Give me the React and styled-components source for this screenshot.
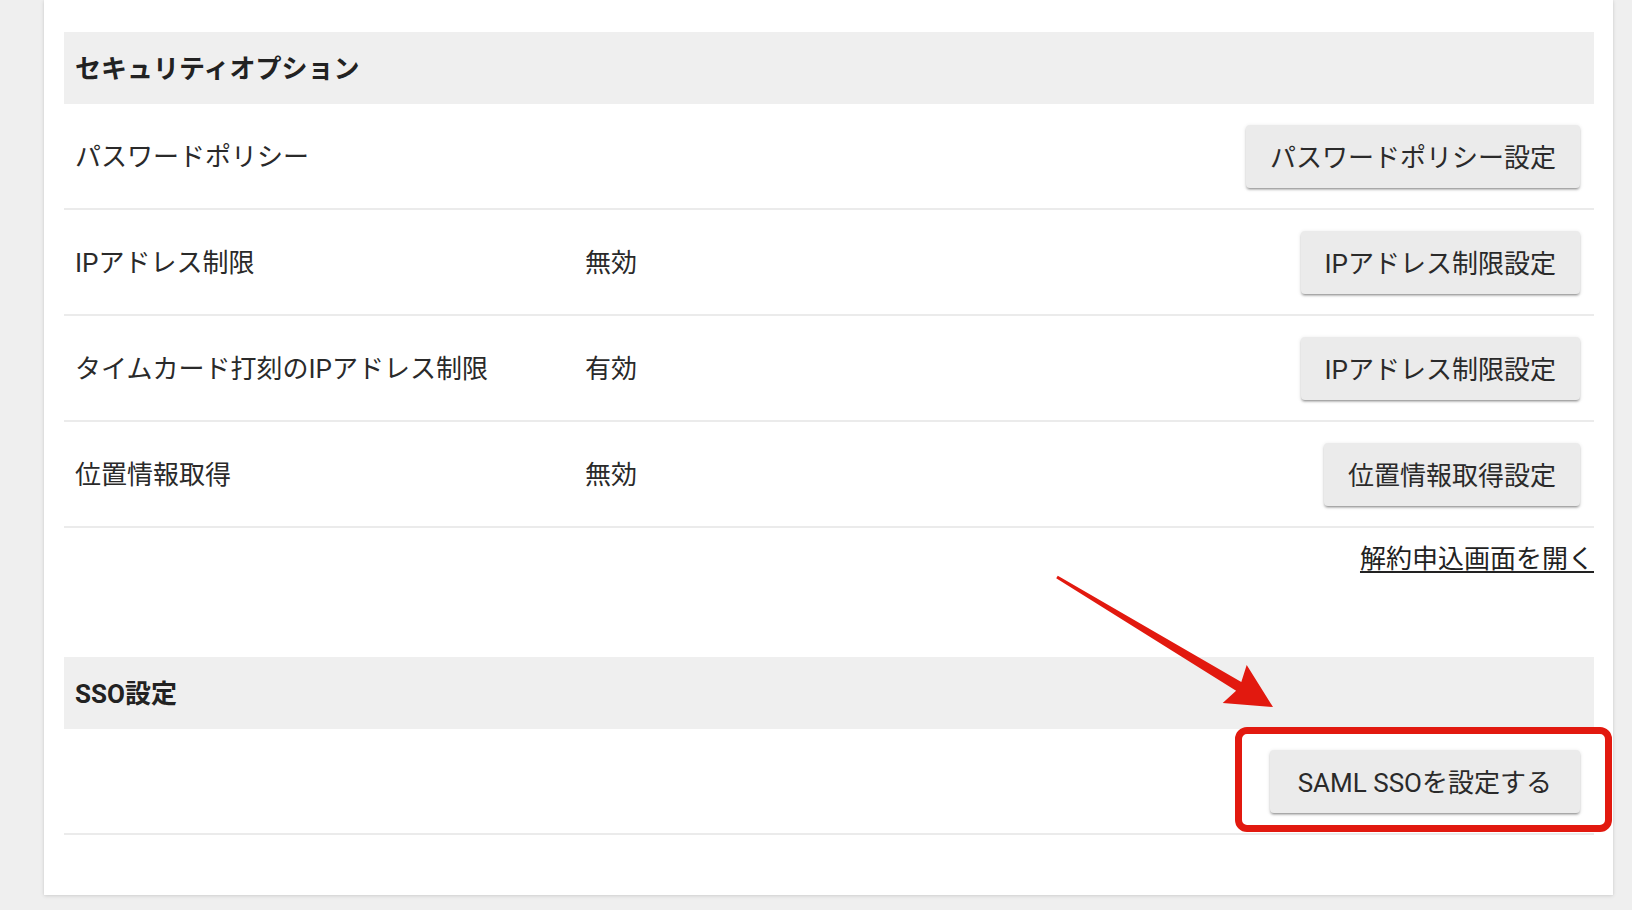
import React from "react";
import styled, { createGlobalStyle } from "styled-components";

const GlobalStyle = createGlobalStyle`
  html, body {
    margin: 0;
    padding: 0;
    background: #efefef;
  }
  body {
    font-family: Roboto, "Noto Sans CJK JP", "Noto Sans", sans-serif;
    color: #222;
  }
`;

const Page = styled.div`
  position: relative;
  width: 1632px;
  height: 910px;
  box-sizing: border-box;
  padding: 0 19px 0 44px;
  overflow: hidden;
`;

const Card = styled.div`
  background: #fff;
  box-sizing: border-box;
  padding: 32px 19px 60px 20px;
  box-shadow: 0 1px 4px rgba(0, 0, 0, 0.12), 0 0 2px rgba(0, 0, 0, 0.06);
`;

const Section = styled.section`
  margin-top: ${(p) => p.$gap || 0}px;
`;

const SectionHeader = styled.div`
  height: 72px;
  background: #efefef;
  display: flex;
  align-items: center;
  padding-left: 11px;
`;

const SectionTitle = styled.h2`
  margin: 0;
  padding-bottom: 4px;
  font-size: 26px;
  font-weight: 700;
  color: #222;
`;

const Row = styled.div`
  position: relative;
  display: grid;
  grid-template-columns: 510px 1fr auto;
  align-items: center;
  min-height: 104px;
  padding: 0 14px 0 11px;
  border-bottom: 2px solid #ebebeb;
`;

const Label = styled.div`
  padding-bottom: 4px;
  font-size: 26px;
  color: #2a2a2a;
`;

const Value = styled(Label)``;

const Button = styled.button`
  height: 63px;
  padding: 0 ${(p) => p.$padX || 24}px 2px;
  border: none;
  border-radius: 4px;
  background: #ebebeb;
  color: #2a2a2a;
  font-family: Roboto, "Noto Sans CJK JP", sans-serif;
  font-size: 26px;
  cursor: pointer;
  box-shadow: 0 2px 2px rgba(0, 0, 0, 0.2), 0 3px 1px -2px rgba(0, 0, 0, 0.14),
    0 1px 4px rgba(0, 0, 0, 0.12);
  white-space: nowrap;
`;

const LinkRow = styled.div`
  display: flex;
  justify-content: flex-end;
  margin-top: 16px;
`;

const TextLink = styled.a`
  font-size: 26px;
  line-height: 30px;
  color: #222;
  text-decoration: underline;
  text-underline-offset: 3px;
  cursor: pointer;
`;

const Highlight = styled.div`
  position: absolute;
  top: -2px;
  bottom: 1px;
  right: -18px;
  width: 377px;
  box-sizing: border-box;
  border: 7px solid #e2190f;
  border-radius: 12px;
  pointer-events: none;
`;

const ArrowOverlay = styled.svg`
  position: absolute;
  left: 1040px;
  top: 560px;
  width: 250px;
  height: 160px;
  pointer-events: none;
`;

const rows = [
  { label: "パスワードポリシー", value: "", action: "パスワードポリシー設定" },
  { label: "IPアドレス制限", value: "無効", action: "IPアドレス制限設定" },
  { label: "タイムカード打刻のIPアドレス制限", value: "有効", action: "IPアドレス制限設定" },
  { label: "位置情報取得", value: "無効", action: "位置情報取得設定" },
];

export default function App() {
  return (
    <>
      <GlobalStyle />
      <Page>
        <Card>
          <Section>
            <SectionHeader>
              <SectionTitle>セキュリティオプション</SectionTitle>
            </SectionHeader>
            {rows.map((r, i) => (
              <Row key={i}>
                <Label>{r.label}</Label>
                <Value>{r.value}</Value>
                <Button>{r.action}</Button>
              </Row>
            ))}
            <LinkRow>
              <TextLink>解約申込画面を開く</TextLink>
            </LinkRow>
          </Section>
          <Section $gap={83}>
            <SectionHeader>
              <SectionTitle>SSO設定</SectionTitle>
            </SectionHeader>
            <Row>
              <Label />
              <Value />
              <Button $padX={28}>SAML SSOを設定する</Button>
              <Highlight />
            </Row>
          </Section>
        </Card>
        <ArrowOverlay viewBox="0 0 250 160">
          <polygon
            fill="#e2190f"
            points="17.8,15.7 201.3,122.1 206.7,105 233,147 182.7,143 196.1,130.7 16.2,18.3"
          />
        </ArrowOverlay>
      </Page>
    </>
  );
}
